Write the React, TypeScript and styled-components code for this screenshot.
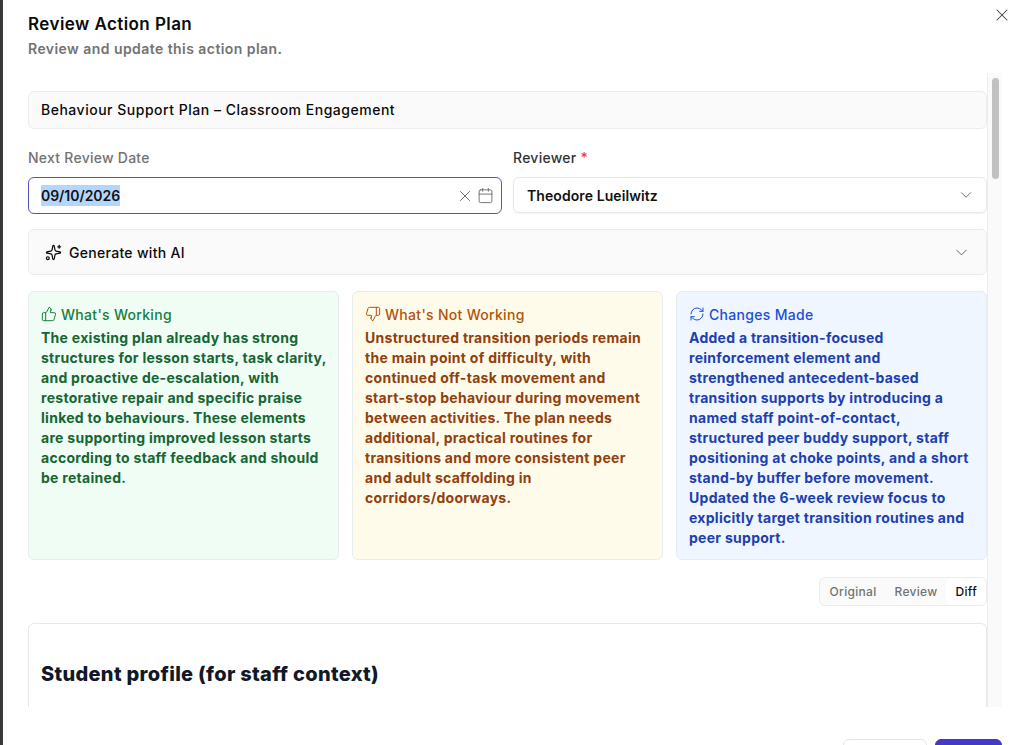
import { createGlobalStyle, styled } from 'styled-components'
import { Calendar, ChevronDown, RefreshCw, Sparkles, ThumbsDown, ThumbsUp, X } from 'lucide-react'

const GlobalStyle = createGlobalStyle`
  html, body {
    margin: 0;
    height: 745px;
    overflow: hidden;
    background: #fff;
    font-family: Inter, 'Liberation Sans', sans-serif;
    color: #0a0a0a;
  }
  * { box-sizing: border-box; }
`

const Page = styled.div`
  display: flex;
  height: 745px;
  border-left: 3px solid #3a3a3a;
`

const Modal = styled.div`
  position: relative;
  flex: 1;
  min-width: 0;
  display: flex;
  flex-direction: column;
  padding: 13px 19px 0 25px;
  overflow: hidden;
  > * { flex-shrink: 0; }
`

const CloseButton = styled.button`
  position: absolute;
  top: 5px;
  right: 9px;
  display: flex;
  padding: 0;
  border: 0;
  background: none;
  color: #444;
`

const Title = styled.h2`
  margin: 0;
  font-size: 17px;
  line-height: 22px;
  font-weight: 600;
  letter-spacing: 0.43px;
`

const Subtitle = styled.p`
  margin: 4px 0 0;
  font-size: 14px;
  line-height: 20px;
  font-weight: 600;
  color: #737373;
  letter-spacing: 0.44px;
`

const Body = styled.div`
  display: flex;
  height: 634px;
  margin-top: 14px;
  overflow: hidden;
`

const Content = styled.div`
  flex: 1;
  min-width: 0;
  padding-top: 18px;
  display: flex;
  flex-direction: column;
`

const Track = styled.div`
  flex: 0 0 15px;
  padding: 5px 3px 0 4px;
  background: #fafafa;
  border-left: 1px solid #ededed;
`

const Thumb = styled.div`
  height: 101px;
  border-radius: 4px;
  background: #c1c1c1;
`

const TitleField = styled.div`
  height: 38px;
  display: flex;
  align-items: center;
  padding: 0 12px 2px;
  background: #fafafa;
  border: 1px solid #ececec;
  border-radius: 6px;
  font-size: 14px;
  font-weight: 500;
  letter-spacing: 0.51px;
`

const FieldRow = styled.div`
  display: grid;
  grid-template-columns: 474px 1fr;
  column-gap: 11px;
  margin-top: 19px;
`

const Field = styled.div`
  display: flex;
  flex-direction: column;
`

const Label = styled.label<{ $strong?: boolean }>`
  height: 20px;
  margin-bottom: 9px;
  font-size: 14px;
  line-height: 20px;
  font-weight: 500;
  letter-spacing: 0.25px;
  color: ${p => (p.$strong ? '#333' : '#737373')};
`

const Required = styled.span`
  color: #ef4444;
`

const DateField = styled.div`
  height: 37px;
  display: flex;
  align-items: center;
  gap: 3px;
  padding: 0 7px 0 12px;
  border: 1px solid #5b54b8;
  border-radius: 6px;
  color: #666;
`

const DateValue = styled.span`
  margin-right: auto;
  padding: 1px 0;
  background: #b4d5fe;
  color: #111;
  font-size: 14px;
  line-height: 19px;
  font-weight: 600;
  letter-spacing: -0.05px;
`

const SelectField = styled.div`
  height: 36px;
  display: flex;
  align-items: center;
  justify-content: space-between;
  padding: 0 11px 0 13px;
  border: 1px solid #e8e8e8;
  border-radius: 6px;
  box-shadow: 0 1px 2px rgba(0, 0, 0, 0.05);
  font-size: 14px;
  font-weight: 600;
  letter-spacing: 0.08px;
  color: #111;
`

const Accordion = styled.div`
  height: 46px;
  margin-top: 15px;
  display: flex;
  align-items: center;
  gap: 7px;
  padding: 0 15px 0 16px;
  background: #fafafa;
  border: 1px solid #ececec;
  border-radius: 6px;
  font-size: 14px;
  font-weight: 500;
  letter-spacing: 0.3px;
`

const AccordionChevron = styled(ChevronDown)`
  margin-left: auto;
  color: #666;
`

const Cards = styled.div`
  display: grid;
  grid-template-columns: repeat(3, minmax(0, 1fr));
  column-gap: 13px;
  margin-top: 16px;
`

const tones = {
  green: { bg: '#f0fdf4', head: '#15803d', text: '#166534' },
  amber: { bg: '#fffbeb', head: '#b45309', text: '#92400e' },
  blue: { bg: '#eff6ff', head: '#1d4ed8', text: '#1e40af' },
}
type Tone = keyof typeof tones

const Card = styled.div<{ $tone: Tone }>`
  height: 269px;
  padding: 12px 12px 0;
  border: 1px solid #e8ecef;
  border-radius: 6px;
  background: ${p => tones[p.$tone].bg};
`

const CardHead = styled.div<{ $tone: Tone }>`
  display: flex;
  align-items: center;
  gap: 4px;
  height: 20px;
  font-size: 14px;
  font-weight: 500;
  letter-spacing: 0.3px;
  color: ${p => tones[p.$tone].head};
`

const CardText = styled.p<{ $tone: Tone }>`
  margin: 4px 0 0;
  font-size: 14px;
  line-height: 20px;
  font-weight: 700;
  letter-spacing: 0.28px;
  white-space: pre;
  color: ${p => tones[p.$tone].text};
`

const ToggleRow = styled.div`
  display: flex;
  justify-content: flex-end;
  margin-top: 17px;
`

const Toggle = styled.div`
  display: flex;
  height: 29px;
  padding-left: 10px;
  background: #fafafa;
  border: 1px solid #ececec;
  border-radius: 6px;
`

const ToggleItem = styled.span<{ $active?: boolean }>`
  display: flex;
  align-items: center;
  padding: 0 ${p => (p.$active ? '9px' : '0')};
  margin-left: ${p => (p.$active ? '9px' : '0')};
  margin-right: ${p => (p.$active ? '0' : '18px')};
  border-radius: 6px;
  font-size: 12px;
  font-weight: 500;
  letter-spacing: 0.3px;
  color: ${p => (p.$active ? '#111' : '#737373')};
  background: ${p => (p.$active ? '#fff' : 'transparent')};
  &:nth-child(2) { margin-right: 0; }
`

const DocCard = styled.div`
  flex: 1;
  margin-top: 17px;
  padding: 36px 12px 0;
  border: 1px solid #e8e8e8;
  border-bottom: 0;
  border-radius: 6px 6px 0 0;
`

const DocHeading = styled.h2`
  margin: 0;
  font-size: 20px;
  line-height: 28px;
  font-weight: 800;
  color: #111827;
  letter-spacing: 0.31px;
`

const Footer = styled.div`
  display: flex;
  justify-content: flex-end;
  gap: 8px;
  margin-top: 32px;
`

const FooterButton = styled.button<{ $primary?: boolean }>`
  width: ${p => (p.$primary ? '67px' : '84px')};
  height: 36px;
  border-radius: 6px;
  border: 1px solid ${p => (p.$primary ? '#4338ca' : '#e5e5e5')};
  background: ${p => (p.$primary ? '#4338ca' : '#fff')};
`

const cards: { tone: Tone; title: string; Icon: typeof ThumbsUp; text: string }[] = [
  {
    tone: 'green',
    title: "What's Working",
    Icon: ThumbsUp,
    text: `The existing plan already has strong
structures for lesson starts, task clarity,
and proactive de-escalation, with
restorative repair and specific praise
linked to behaviours. These elements
are supporting improved lesson starts
according to staff feedback and should
be retained.`,
  },
  {
    tone: 'amber',
    title: "What's Not Working",
    Icon: ThumbsDown,
    text: `Unstructured transition periods remain
the main point of difficulty, with
continued off-task movement and
start-stop behaviour during movement
between activities. The plan needs
additional, practical routines for
transitions and more consistent peer
and adult scaffolding in
corridors/doorways.`,
  },
  {
    tone: 'blue',
    title: 'Changes Made',
    Icon: RefreshCw,
    text: `Added a transition-focused
reinforcement element and
strengthened antecedent-based
transition supports by introducing a
named staff point-of-contact,
structured peer buddy support, staff
positioning at choke points, and a short
stand-by buffer before movement.
Updated the 6-week review focus to
explicitly target transition routines and
peer support.`,
  },
]

export default function App() {
  return (
    <>
      <GlobalStyle />
      <Page>
        <Modal>
          <CloseButton aria-label="Close">
            <X size={20} strokeWidth={1.25} />
          </CloseButton>
          <Title>Review Action Plan</Title>
          <Subtitle>Review and update this action plan.</Subtitle>
          <Body>
            <Content>
              <TitleField>Behaviour Support Plan – Classroom Engagement</TitleField>
              <FieldRow>
                <Field>
                  <Label>Next Review Date</Label>
                  <DateField>
                    <DateValue>09/10/2026</DateValue>
                    <X size={18} strokeWidth={1.25} />
                    <Calendar size={17} strokeWidth={1.25} />
                  </DateField>
                </Field>
                <Field>
                  <Label $strong>
                    Reviewer <Required>*</Required>
                  </Label>
                  <SelectField>
                    Theodore Lueilwitz
                    <ChevronDown size={18} strokeWidth={1.25} color="#666" />
                  </SelectField>
                </Field>
              </FieldRow>
              <Accordion>
                <Sparkles size={17} strokeWidth={1.75} />
                Generate with AI
                <AccordionChevron size={19} strokeWidth={1.25} />
              </Accordion>
              <Cards>
                {cards.map(({ tone, title, Icon, text }) => (
                  <Card key={tone} $tone={tone}>
                    <CardHead $tone={tone}>
                      <Icon size={16} strokeWidth={1.5} />
                      {title}
                    </CardHead>
                    <CardText $tone={tone}>{text}</CardText>
                  </Card>
                ))}
              </Cards>
              <ToggleRow>
                <Toggle>
                  <ToggleItem>Original</ToggleItem>
                  <ToggleItem>Review</ToggleItem>
                  <ToggleItem $active>Diff</ToggleItem>
                </Toggle>
              </ToggleRow>
              <DocCard>
                <DocHeading>Student profile (for staff context)</DocHeading>
              </DocCard>
            </Content>
            <Track>
              <Thumb />
            </Track>
          </Body>
          <Footer>
            <FooterButton />
            <FooterButton $primary />
          </Footer>
        </Modal>
      </Page>
    </>
  )
}
